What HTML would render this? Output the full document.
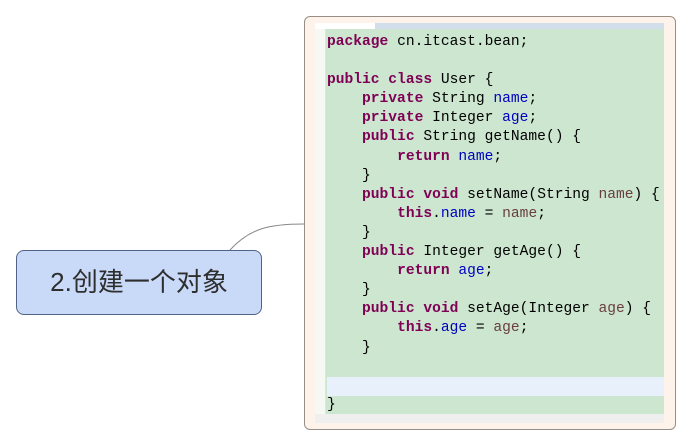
<!DOCTYPE html>
<html><head><meta charset="utf-8"><style>
html,body{margin:0;padding:0;background:#fff;width:692px;height:446px;overflow:hidden;position:relative}
.frame{position:absolute;left:304px;top:16px;width:370px;height:412px;background:#fdf3ea;border:1px solid #9a8f86;border-radius:6px}
.img{position:absolute;left:315px;top:23px;width:349px;height:400px;background:#cce6cf;overflow:hidden}
.tab{position:absolute;left:0;top:0;width:349px;height:6px;background:#d3deec}
.tab i{position:absolute;left:0;top:0;width:60px;height:6px;background:#fff}
.gut{position:absolute;left:0;top:6px;width:10px;height:385px;background:#f6f8f3;border-right:1px solid #d8e8d8}
.hl{position:absolute;left:12px;top:354px;width:337px;height:19px;background:#e8f0fb}
.sb{position:absolute;left:0;top:391px;width:349px;height:9px;background:#efefef}
pre{position:absolute;left:327px;top:33px;margin:0;font:14.6px/19.1px "Liberation Mono",monospace;color:#000}
b{color:#7f0055}
.f{color:#0000c0}.p{color:#6a3e3e}
.node{position:absolute;left:16px;top:250px;width:244px;height:63px;background:#c9daf8;border:1px solid #4f6486;border-radius:8px;font:26px "Liberation Sans","Noto Sans CJK SC",sans-serif;color:#2e2e2e;text-align:center;line-height:63px}
</style></head><body>
<svg style="position:absolute;left:0;top:0" width="692" height="446"><path d="M230 250 C250 228 270 224 304 224" fill="none" stroke="#888" stroke-width="1"/></svg>
<div class="frame"></div>
<div class="img"><div class="tab"><i></i></div><div class="gut"></div><div class="hl"></div><div class="sb"></div></div>
<pre><b>package</b> cn.itcast.bean;

<b>public class</b> User {
    <b>private</b> String <span class="f">name</span>;
    <b>private</b> Integer <span class="f">age</span>;
    <b>public</b> String getName() {
        <b>return</b> <span class="f">name</span>;
    }
    <b>public void</b> setName(String <span class="p">name</span>) {
        <b>this</b>.<span class="f">name</span> = <span class="p">name</span>;
    }
    <b>public</b> Integer getAge() {
        <b>return</b> <span class="f">age</span>;
    }
    <b>public void</b> setAge(Integer <span class="p">age</span>) {
        <b>this</b>.<span class="f">age</span> = <span class="p">age</span>;
    }


}</pre>
<div class="node">2.创建一个对象</div>
</body></html>
